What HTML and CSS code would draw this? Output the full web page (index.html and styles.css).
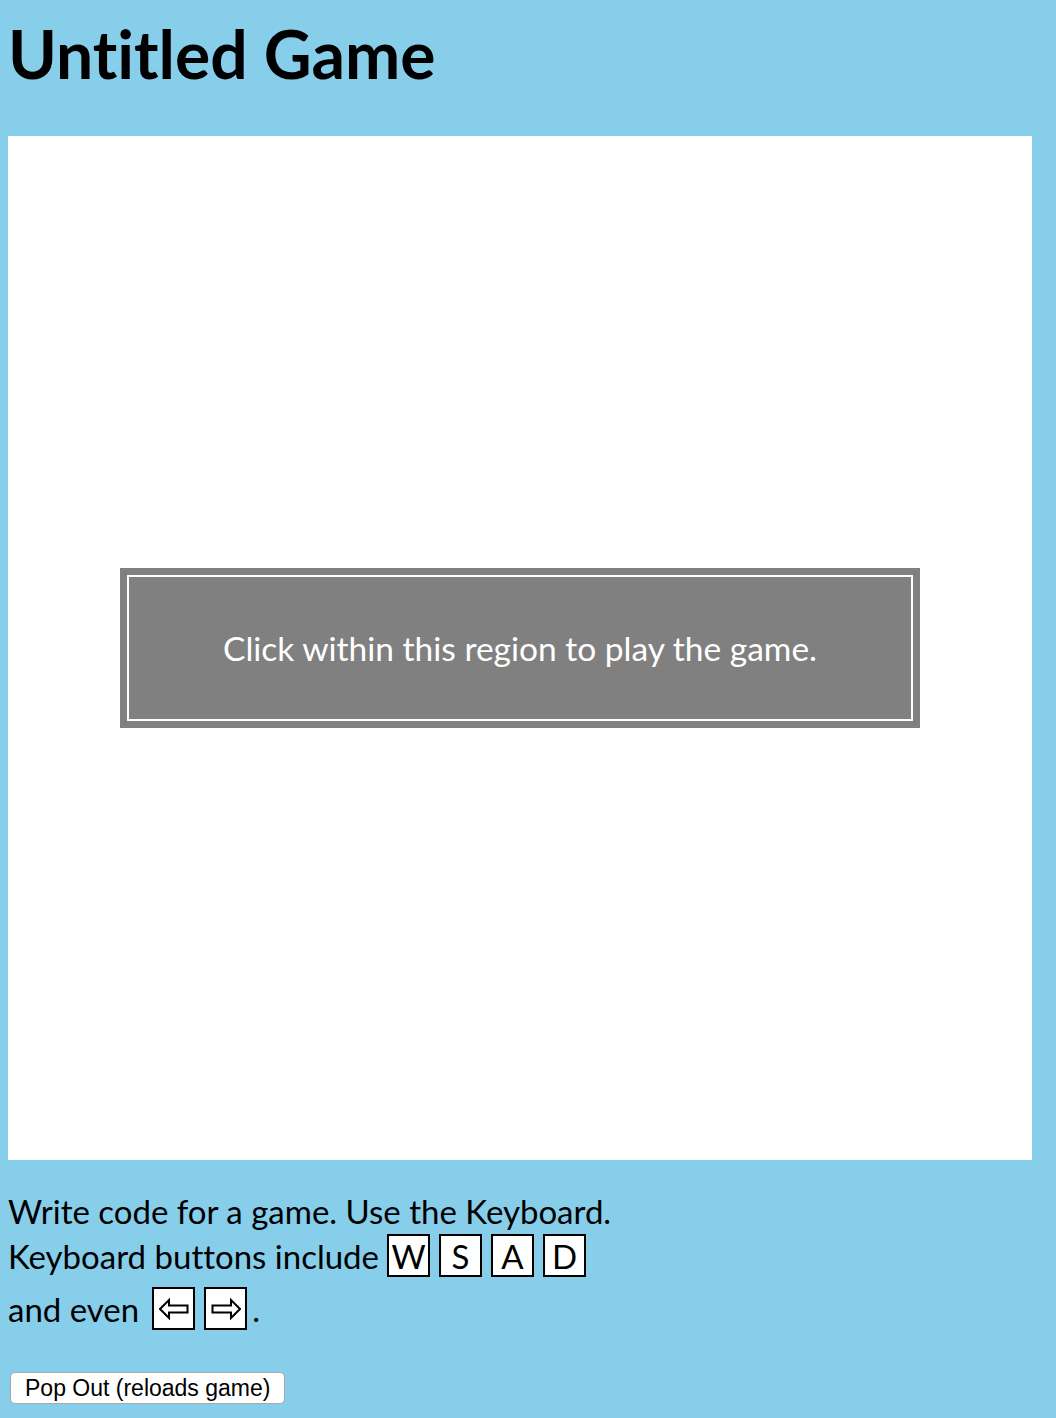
FILE: index.html
```html
<!DOCTYPE html>
<html lang="en">
<head>
    <meta charset="UTF-8">
    <title>Untitled Game</title>
    <link rel="stylesheet" href="styles.css">
</head>
<body>
    <h1 class="title">Untitled Game</h1>

    <div class="game" id="game">
        <div class="start-overlay">
            <div class="start-inner">Click within this region to play the game.</div>
        </div>
    </div>

    <div class="instructions">
        <div class="line">Write code for a game. Use the Keyboard.</div>
        <div class="line keys-line">Keyboard buttons include
            <span class="key first">W</span><span class="key">S</span><span class="key">A</span><span class="key">D</span>
        </div>
        <div class="line arrows-line">and even
            <span class="key first arrow">
                <svg width="30" height="22" viewBox="0 0 30 22"><path d="M1 11 L10 2 L10 7.5 L28.5 7.5 L28.5 14.5 L10 14.5 L10 20 Z" fill="#fff" stroke="#000" stroke-width="2" stroke-linejoin="miter"/></svg>
            </span><span class="key arrow">
                <svg width="30" height="22" viewBox="0 0 30 22"><path d="M29 11 L20 2 L20 7.5 L1.5 7.5 L1.5 14.5 L20 14.5 L20 20 Z" fill="#fff" stroke="#000" stroke-width="2" stroke-linejoin="miter"/></svg>
            </span><span class="stop">.</span>
        </div>
    </div>

    <button class="popout-btn" type="button">Pop Out (reloads game)</button>
</body>
</html>
```

FILE: styles.css
```css
body {
    margin: 8px;
    background-color: #87ceeb;
    font-family: Lato, "Open Sans", sans-serif;
    font-variant-ligatures: none;
    color: #000;
}
.title {
    font-size: 66px;
    font-weight: bold;
    line-height: 1;
    margin: 0;
    padding: 13px 0 49px;
}
.game {
    width: 1024px;
    height: 1024px;
    background-color: #fff;
    display: flex;
    align-items: center;
    justify-content: center;
}
.start-overlay {
    width: 800px;
    height: 160px;
    box-sizing: border-box;
    padding: 7px;
    background-color: #808080;
}
.start-inner {
    height: 100%;
    box-sizing: border-box;
    border: 2px solid #fff;
    display: flex;
    align-items: center;
    justify-content: center;
    color: #fff;
    font-size: 33.5px;
}
.instructions {
    margin-top: 29px;
    font-size: 33px;
}
.line {
    display: flex;
    align-items: center;
    height: 44px;
}
.keys-line {
    height: 45px;
}
.arrows-line {
    height: 61px;
}
.key {
    display: inline-flex;
    align-items: center;
    justify-content: center;
    width: 39px;
    height: 39px;
    border: 2px solid #000;
    background-color: #fff;
    margin-left: 9px;
}
.keys-line .key.first {
    margin-left: 8px;
}
.arrows-line .key.first {
    margin-left: 13px;
}
.arrow svg {
    display: block;
}
.stop {
    margin-left: 5px;
}
.popout-btn {
    display: block;
    height: 32px;
    margin: 33px 0 0 2px;
    padding: 0 14px;
    font-family: "Liberation Sans", Arial, sans-serif;
    font-size: 23px;
    background-color: #fff;
    border: 1px solid #a8a8a8;
    border-radius: 5px;
}
```
